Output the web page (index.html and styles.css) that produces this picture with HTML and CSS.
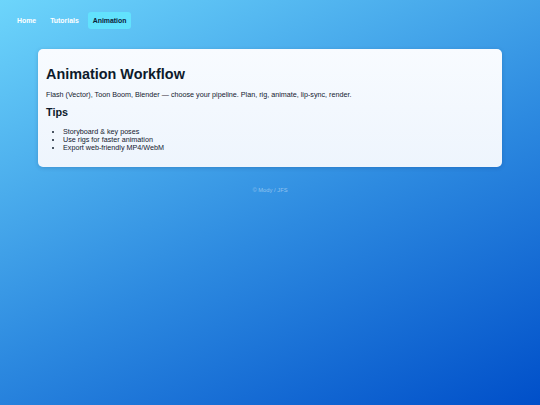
FILE: index.html
```html
<!DOCTYPE html>
<html lang="en">
<head>
<meta charset="utf-8">
<title>Animation Workflow</title>
<link rel="stylesheet" href="styles.css">
</head>
<body>
<nav class="nav">
  <a class="nav-item" href="#">Home</a>
  <a class="nav-item" href="#">Tutorials</a>
  <a class="nav-item active" href="#">Animation</a>
</nav>
<main class="card">
  <h1 class="title">Animation Workflow</h1>
  <p class="lead">Flash (Vector), Toon Boom, Blender — choose your pipeline. Plan, rig, animate, lip-sync, render.</p>
  <h2 class="subtitle">Tips</h2>
  <ul class="tips">
    <li>Storyboard &amp; key poses</li>
    <li>Use rigs for faster animation</li>
    <li>Export web-friendly MP4/WebM</li>
  </ul>
</main>
<footer class="footer">© Mody / JFS</footer>
</body>
</html>
```
FILE: styles.css
```css
html, body {
  margin: 0;
  padding: 0;
}
body {
  min-height: 405px;
  background: linear-gradient(155deg, #6dd5fb 0%, #2d8ae0 55%, #004fc9 100%);
  font-family: "Liberation Sans", Arial, sans-serif;
  font-size: 7.2px;
  color: #13202f;
  padding-top: 12px;
  box-sizing: border-box;
}
.nav {
  display: flex;
  gap: 4px;
  padding: 0 12px;
}
.nav-item {
  display: block;
  padding: 4.5px 5px;
  font-size: 6.9px;
  line-height: 8px;
  font-weight: bold;
  color: #ffffff;
  text-decoration: none;
  border-radius: 3px;
}
.nav-item.active {
  background: #62e2fd;
  color: #0b2038;
}
.card {
  margin: 20px 38px 0 38px;
  padding: 8px;
  background: linear-gradient(180deg, #f8fbff 0%, #eef5fd 100%);
  border-radius: 5px;
  box-shadow: 0 1px 4px rgba(0, 30, 80, 0.18);
}
.title {
  font-size: 14.4px;
  line-height: 16.5px;
  margin: 8.5px 0 9px 0;
  color: #0d1a2b;
}
.lead {
  margin: 0;
  line-height: 8.3px;
}
.subtitle {
  font-size: 10.8px;
  line-height: 12.4px;
  margin: 7px 0 9px 0;
  color: #0d1a2b;
}
.tips {
  margin: 0 0 7px 0;
  padding-left: 17px;
  line-height: 8.2px;
}
.footer {
  text-align: center;
  margin-top: 20px;
  font-size: 5.8px;
  color: rgba(255, 255, 255, 0.45);
}
```
